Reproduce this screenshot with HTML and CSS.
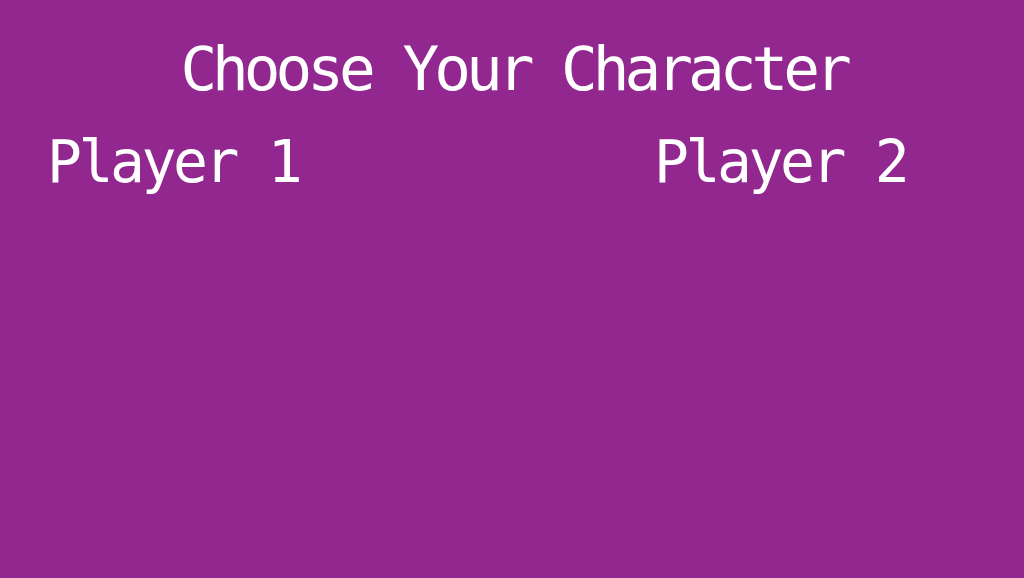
FILE: index.html
```html
<!DOCTYPE html>
<html lang="en">
<head>
<meta charset="utf-8">
<title>Choose Your Character</title>
<link rel="stylesheet" href="styles.css">
</head>
<body>
<main class="screen">
  <h1 class="title">Choose Your Character</h1>
  <section class="players">
    <h2 class="player">Player 1</h2>
    <h2 class="player">Player 2</h2>
  </section>
</main>
</body>
</html>
```

FILE: styles.css
```css
html, body {
  margin: 0;
  padding: 0;
  height: 100%;
  background: #92278f;
}
.screen {
  min-height: 100%;
  display: flex;
  flex-direction: column;
  color: #ffffff;
  font-family: "DejaVu Sans Mono", monospace;
  padding-top: 38px;
  box-sizing: border-box;
}
.title {
  margin: 0;
  font-size: 61px;
  line-height: 1;
  font-weight: normal;
  letter-spacing: -5px;
  text-align: center;
  padding-left: 3px;
}
.players {
  display: grid;
  grid-template-columns: 607px 1fr;
  padding-left: 47px;
  margin-top: 34px;
}
.player {
  margin: 0;
  font-size: 58px;
  line-height: 1;
  font-weight: normal;
  letter-spacing: -3.4px;
}
```
